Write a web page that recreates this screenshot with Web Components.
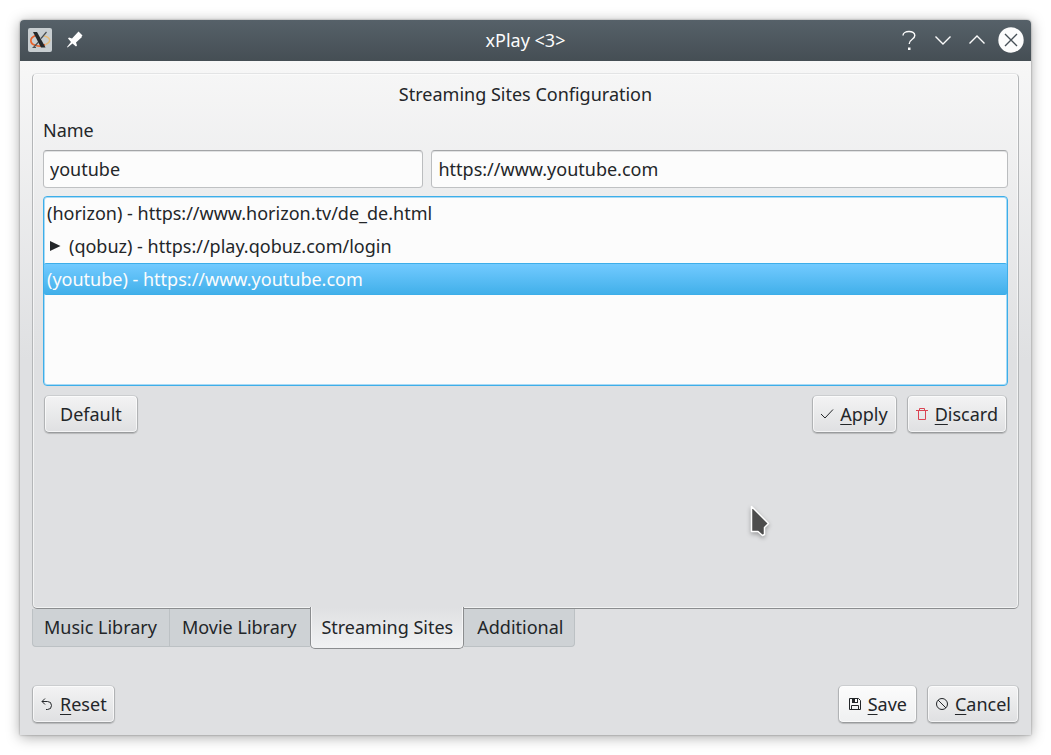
<!DOCTYPE html>
<html lang="en">
<head>
<meta charset="utf-8">
<meta name="viewport" content="width=device-width, initial-scale=1">
<title>xPlay</title>
<style>
  html { background: #fff; }
  body {
    margin: 0; padding: 20px; box-sizing: border-box; min-height: 100vh; display: flex;
    font: 18px/24px "Noto Sans", sans-serif; color: #232629;
  }
  xp-window { flex: 1; }
  xp-pointer { position: absolute; left: 750px; top: 504px; }
</style>
</head>
<body>
<xp-window>
  <xp-titlebar slot="title">xPlay &lt;3&gt;</xp-titlebar>
  <xp-tabs>
    <xp-sites-form></xp-sites-form>
  </xp-tabs>
  <xp-button-row slot="footer">
    <xp-button slot="start" icon="reset" key="R">eset</xp-button>
    <xp-button icon="save" key="S" primary>ave</xp-button>
    <xp-button icon="cancel" key="C">ancel</xp-button>
  </xp-button-row>
</xp-window>
<xp-pointer></xp-pointer>

<script>
const define = (name, html, setup) => customElements.define(name, class extends HTMLElement {
  connectedCallback() {
    if (this.shadowRoot) return;
    const root = this.attachShadow({ mode: "open" });
    root.innerHTML = html;
    if (setup) setup(root, this);
  }
});

/* Window frame: title bar, body, footer */
define("xp-window", `
  <style>
    :host {
      display: flex; flex-direction: column; min-width: 0; border-radius: 4px 4px 0 0;
      background: linear-gradient(#f7f7f7 41px, #dfe0e2 340px);
      box-shadow: 0 0 2px rgba(0,0,0,.4), 0 2px 14px rgba(0,0,0,.35);
    }
    main { flex: 1; display: flex; flex-direction: column; padding: 12px 12px 0; }
    footer { padding: 38px 12px 12px; }
  </style>
  <slot name="title"></slot>
  <main><slot></slot></main>
  <footer><slot name="footer"></slot></footer>`);

define("xp-titlebar", `
  <style>
    :host {
      display: grid; grid-template-columns: 1fr auto 1fr; align-items: center; height: 41px;
      padding: 0 7px 1px; box-sizing: border-box; border-radius: 4px 4px 0 0; color: #fcfcfc;
      background: linear-gradient(#566169, #454e54);
    }
    h1 { margin: 0; font: inherit; }
    div { display: flex; align-items: center; gap: 8px; }
    .right { justify-content: flex-end; }
    button { width: 26px; height: 26px; padding: 0; border: 0; background: none; color: inherit; }
    svg { display: block; width: 26px; height: 26px; fill: none; stroke: currentColor; stroke-width: 1.4; }
  </style>
  <div>
    <button aria-label="Window menu"><svg viewBox="0 0 26 26">
      <rect x="1" y="1" width="24" height="24" rx="2" fill="#c8ced1" stroke="none"/>
      <path d="M8.500 8.500C2 11 2.500 17 9 18.500c3.500 1 7 .5 9-1" stroke="#e9622b" stroke-width="1.700"/>
      <path d="M17 9c7 1.500 7.500 6 1.500 8.500" stroke="#e8bb76" stroke-width="1.500"/>
      <path d="M19.500 5 14 11.500M11.500 15 6.500 20.500" stroke="#4a5054" stroke-width="1.200"/>
      <path d="M6 5h4l8.500 15.500h-4.500z" fill="#24282b" stroke="none"/>
      <path d="M5.500 20.500h3.500" stroke="#4a5054" stroke-width="1"/>
    </svg></button>
    <button aria-label="Keep above"><svg viewBox="0 0 26 26">
      <path d="M17.500 4.500 21.500 8.500 20.500 9.500 21 10 15 15.500 16 18.500 15 19.500 11.500 16.500 6.500 20.500 6 20 10 15 7 11.500 8 10.500 11 11.500z" fill="#fff" stroke="none"/>
    </svg></button>
  </div>
  <h1><slot></slot></h1>
  <div class="right">
    <button aria-label="Help"><svg viewBox="0 0 26 26"><path d="M7 8.500C7 3.500 18.800 3 18.800 8.500c0 4-5.600 3.500-5.600 8.500"/><rect x="12" y="20.500" width="2.500" height="2.500" fill="currentColor" stroke="none"/></svg></button>
    <button aria-label="Minimize"><svg viewBox="0 0 26 26"><path d="m5.500 9.500 7.500 7.500 7.500-7.500"/></svg></button>
    <button aria-label="Maximize"><svg viewBox="0 0 26 26"><path d="m5.500 16.500 7.500-7.500 7.500 7.500"/></svg></button>
    <button aria-label="Close"><svg viewBox="0 0 26 26"><circle cx="13" cy="13" r="12.700" fill="#fcfcfc" stroke="none"/><path d="m7 7 12 12M19 7 7 19" stroke="#475057"/></svg></button>
  </div>`);

/* Tab panel with its tabs along the bottom edge */
define("xp-tabs", `
  <style>
    :host { flex: 1; display: flex; flex-direction: column; }
    .panel {
      flex: 1; display: flex; flex-direction: column; padding: 8px 10px; border-radius: 5px;
      border: 1px solid; border-color: #e3e4e5 #b4b6b8 #8b8d8f #b4b6b8;
      box-shadow: inset 0 0 0 1px rgba(255,255,255,.6);
    }
    .tabs { display: flex; align-items: flex-start; height: 38px; }
    button {
      font: inherit; color: inherit; height: 38px; padding: 0 12px 2px; margin: 0;
      border: 1px solid #bcc1c4; border-width: 0 0 1px 1px; background: #ced2d5;
    }
    button:first-child { border-bottom-left-radius: 4px; padding-left: 11px; }
    button:nth-child(2) { padding-right: 14px; }
    button:last-child { border-right-width: 1px; border-bottom-right-radius: 4px; padding-right: 11px; }
    button[aria-selected=true] {
      position: relative; height: 42px; margin-top: -2px; padding: 0 10px 1px;
      border: 1px solid; border-top: 0; border-color: #8b8d8f; border-radius: 0 0 5px 5px;
      background: linear-gradient(#dfe0e2, #f1f2f3);
      box-shadow: inset 1px 0 #f5f5f6, inset -1px 0 #f5f5f6;
    }
    button[aria-selected=true] + button { border-left: 0; padding-left: 13px; }
  </style>
  <div class="panel" role="tabpanel"><slot></slot></div>
  <div class="tabs" role="tablist">
    <button role="tab">Music Library</button>
    <button role="tab">Movie Library</button>
    <button role="tab" aria-selected="true">Streaming Sites</button>
    <button role="tab">Additional</button>
  </div>`);

define("xp-sites-form", `
  <style>
    :host { display: flex; flex-direction: column; --button-end: 8px; }
    h2 { margin: 0 0 12px; font: inherit; text-align: center; }
    label { margin-bottom: 8px; }
    .fields { display: grid; grid-template-columns: 33fr 50fr; gap: 8px; margin-bottom: 8px; }
    input {
      min-width: 0; height: 38px; box-sizing: border-box; padding: 0 6px;
      font: inherit; color: inherit; background: #fcfcfc; border: 1px solid;
      border-color: #a3a5a7 #bbbdbf #bfc1c3; border-radius: 4px; outline: 0;
      box-shadow: inset 0 1px #e1e2e3;
    }
    xp-site-list { margin-bottom: 9px; }
    xp-button-row { padding: 0 1px; }
  </style>
  <h2>Streaming Sites Configuration</h2>
  <label for="name">Name</label>
  <div class="fields">
    <input id="name" type="text" value="youtube">
    <input type="text" aria-label="Address" value="https://www.youtube.com">
  </div>
  <xp-site-list>
    <xp-site>(horizon) - https://www.horizon.tv/de_de.html</xp-site>
    <xp-site parent>(qobuz) - https://play.qobuz.com/login</xp-site>
    <xp-site selected>(youtube) - https://www.youtube.com</xp-site>
  </xp-site-list>
  <xp-button-row>
    <xp-button slot="start" wide>Default</xp-button>
    <xp-button icon="apply" key="A">pply</xp-button>
    <xp-button icon="discard" key="D">iscard</xp-button>
  </xp-button-row>`);

define("xp-site-list", `
  <style>
    :host {
      display: block; min-height: 190px; box-sizing: border-box; background: #fcfcfc;
      border: 1px solid #3daee9; border-radius: 4px; box-shadow: inset 0 0 0 1px #a9daf5;
    }
  </style>
  <slot></slot>`, (root, host) => host.setAttribute("role", "tree"));

define("xp-site", `
  <style>
    :host {
      display: flex; align-items: center; gap: 8px; height: 33px; box-sizing: border-box;
      padding: 0 3px 1px;
    }
    :host([parent]) { padding-left: 6px; }
    :host([selected]) {
      height: 32px; padding-bottom: 0; color: #fcfcfc; border-radius: 2px;
      border: solid #3daee9; border-width: 1px 0;
      background: linear-gradient(#72caff, #42b0ea);
    }
    svg { display: none; width: 11px; height: 10px; }
    :host([parent]) svg { display: block; }
  </style>
  <svg viewBox="0 0 11 10"><path d="M0 0 10.500 5 0 10z" fill="#232629"/></svg>
  <span><slot></slot></span>`, (root, host) => host.setAttribute("role", "treeitem"));

define("xp-button-row", `
  <style>
    :host { display: flex; justify-content: space-between; }
    div { display: flex; gap: 10px; }
  </style>
  <div><slot name="start"></slot></div>
  <div><slot></slot></div>`);

const icons = {
  apply: '<path d="m2 8 4 4 8-8.500"/>',
  discard: '<path d="M2 4.500h12M5.500 4.500v-2h5v2M4.500 4.500v9h7v-9" stroke="#da4453"/>',
  reset: '<path d="M6 2.500 3 5.500 6 8.500M3 5.500h5.500a4 4 0 0 1 0 8H7"/>',
  save: '<path d="M2.500 2.500h9l2 2v9h-11zM4.500 13.500v-4h7v4"/><path d="M5 3h6v4H5z" fill="currentColor" stroke="none"/><path d="M8 3h2v3H8z" fill="#fff" stroke="none"/>',
  cancel: '<circle cx="8" cy="8" r="5.500"/><path d="m4 4 8 8"/>'
};

define("xp-button", `
  <style>
    :host { display: block; }
    button {
      display: flex; align-items: center; height: 38px; gap: 5px;
      padding: 0 var(--button-end, 7px) 0 6px;
      font: inherit; color: inherit; border: 1px solid; border-radius: 5px;
      border-color: #cbcdcf #b1b3b5 #999b9d;
      background: linear-gradient(#f3f3f4, #dfe0e2);
      box-shadow: inset 0 0 0 1px rgba(255,255,255,.65), 0 1px 1px rgba(0,0,0,.18);
    }
    :host([primary]) button { background: linear-gradient(#fcfcfc, #eff0f1); padding: 0 9px 0 8px; }
    :host([wide]) button { padding: 0 15px; }
    svg { width: 16px; height: 16px; fill: none; stroke: currentColor; }
    u { text-decoration: underline; text-decoration-thickness: 1px; text-underline-offset: 3px; text-decoration-skip-ink: none; }
  </style>
  <button type="button"></button>`, (root, host) => {
    const icon = icons[host.getAttribute("icon")];
    const key = host.getAttribute("key");
    root.querySelector("button").innerHTML =
      (icon ? `<svg viewBox="0 0 16 16" aria-hidden="true">${icon}</svg>` : "") +
      `<span>${key ? `<u>${key}</u>` : ""}<slot></slot></span>`;
  });

define("xp-pointer", `
  <style>
    :host { display: block; pointer-events: none; }
    svg { display: block; width: 22px; height: 34px; filter: drop-shadow(0 2px 2px rgba(0,0,0,.3)); }
  </style>
  <svg viewBox="0 0 22 34" aria-hidden="true"><path d="M1.500 2.500v25h6.500l4.500 4 2-1v-7l4-4z" fill="#4d4d4d" stroke="#fff" stroke-width="1.500" stroke-linejoin="round"/></svg>`);
</script>
</body>
</html>
